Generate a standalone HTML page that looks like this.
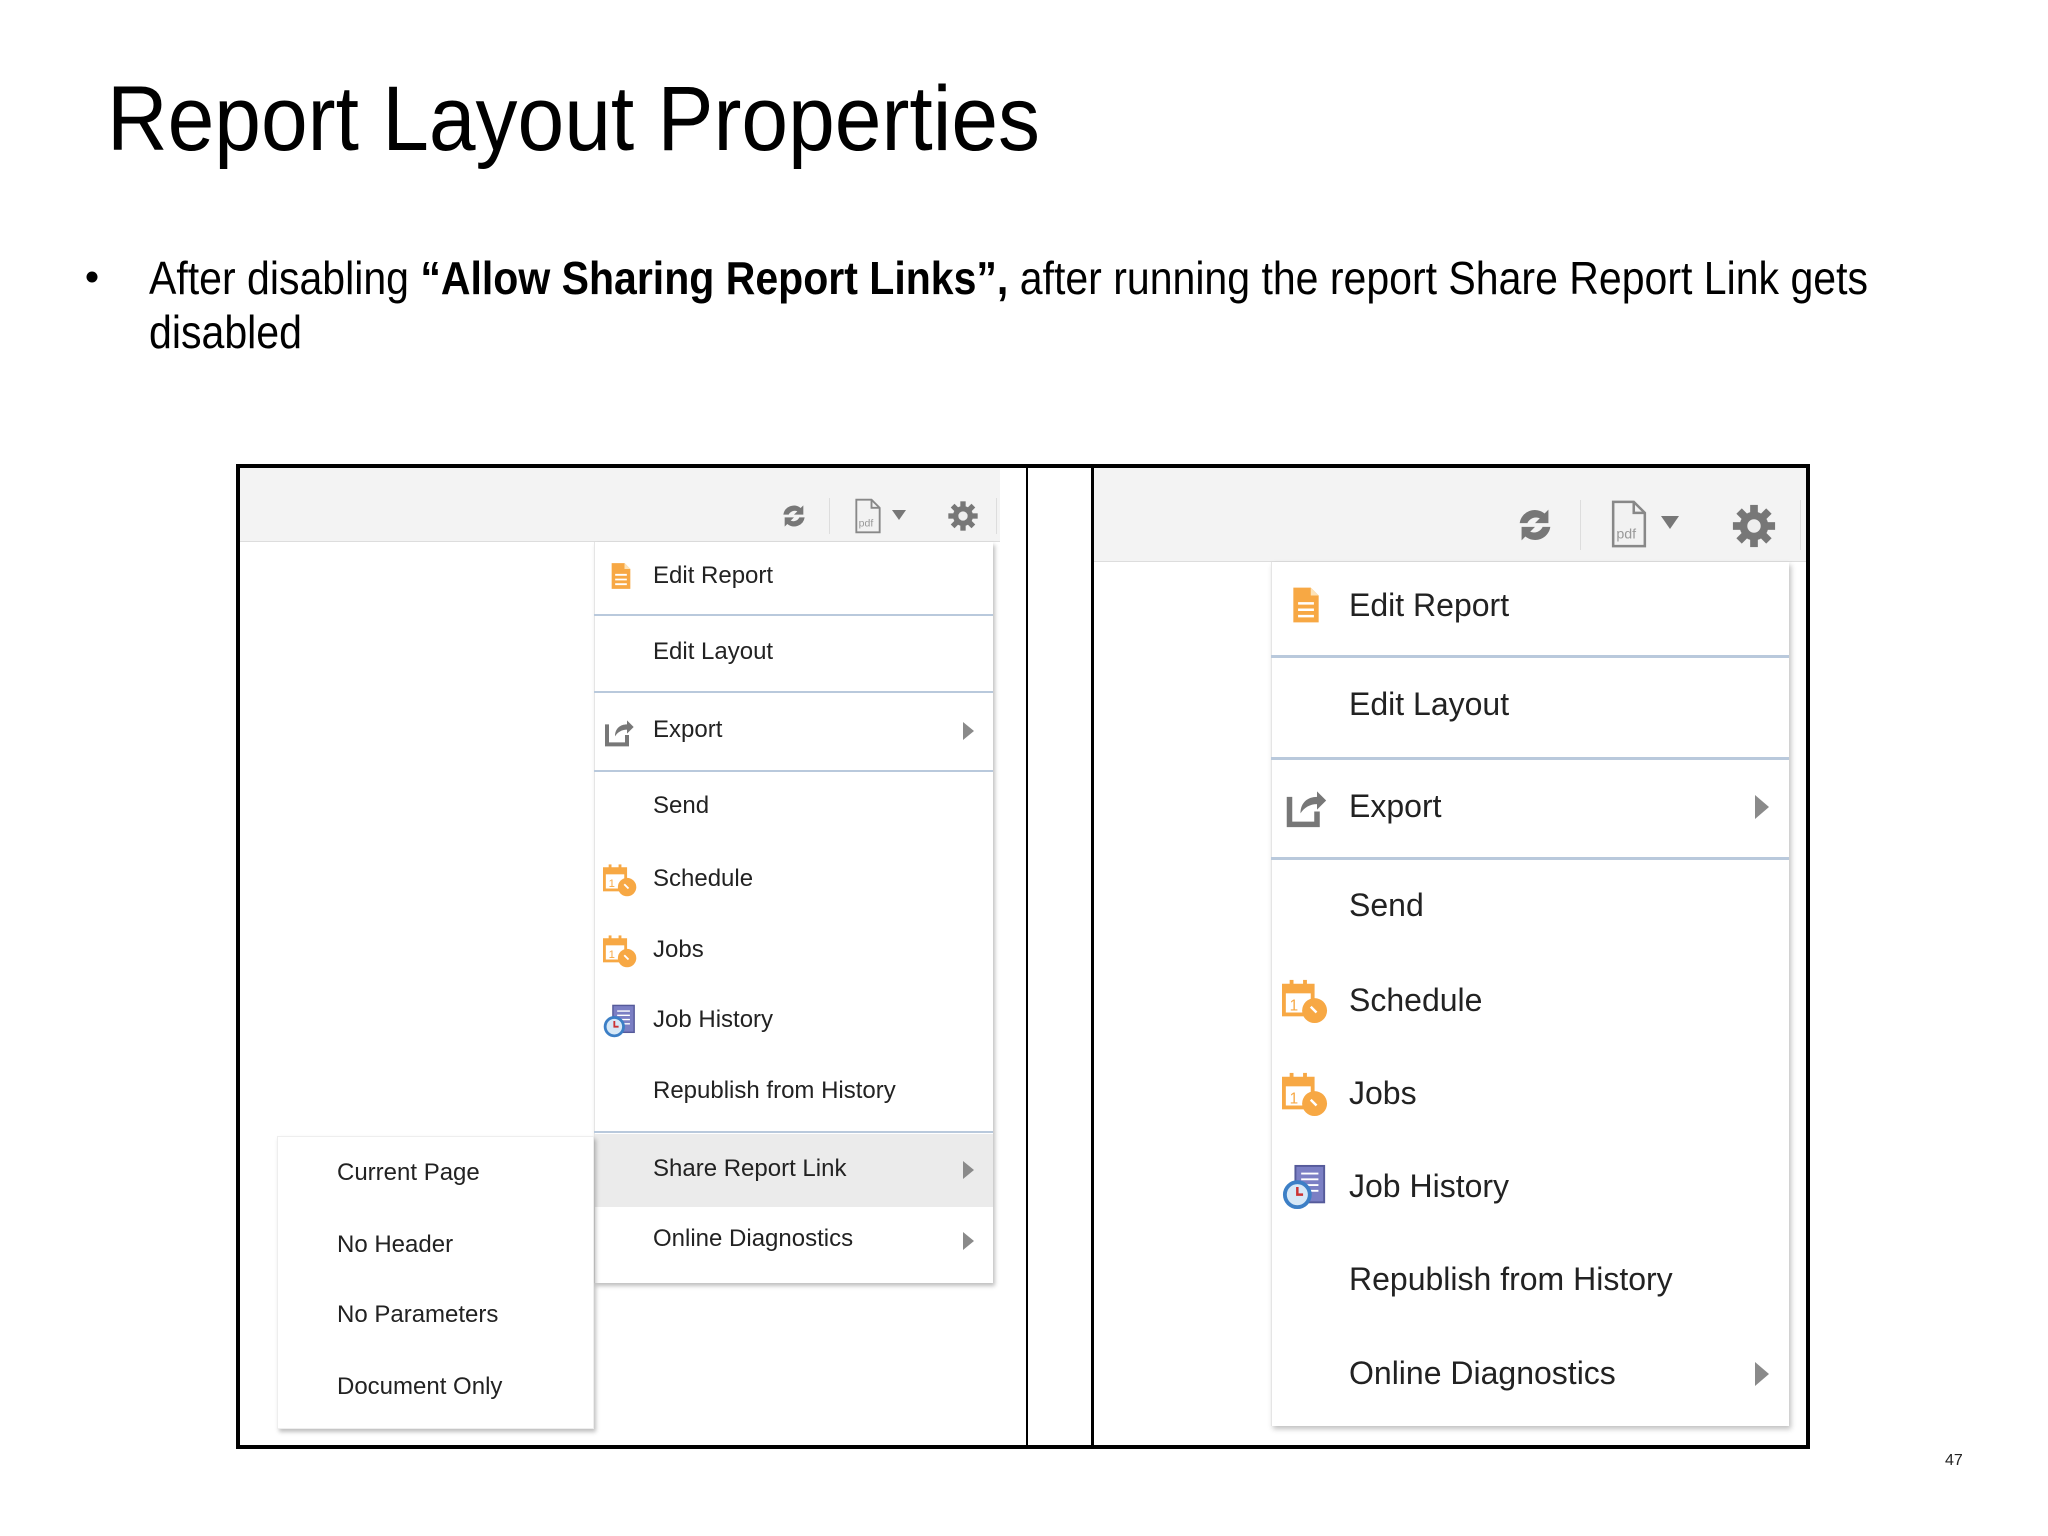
<!DOCTYPE html>
<html><head><meta charset="utf-8"><style>
*{margin:0;padding:0;box-sizing:border-box}
body{width:2048px;height:1536px;background:#fff;position:relative;overflow:hidden;font-family:"Liberation Sans",Arial,sans-serif}
.a{position:absolute}
.t{position:absolute;height:40px;line-height:40px;color:#222;white-space:nowrap}
.L{font-size:24px}
.R{font-size:32px}
.sep{position:absolute;height:2px;background:#b9c9dc}
.tri{position:absolute;width:0;height:0;border-top:9px solid transparent;border-bottom:9px solid transparent;border-left:11px solid #8a8a8a}
svg.ic{position:absolute}
</style></head><body>
<svg width="0" height="0" style="position:absolute">
<defs>
<symbol id="doc" viewBox="0 0 24 24"><path d="M4 1h11l5 5v17H4z" fill="#f7a844"/><path d="M15 1v5h5" fill="#fde3b8"/><path d="M7 11h10M7 15h10M7 19h10" stroke="#fff" stroke-width="1.6"/></symbol>
<symbol id="exp" viewBox="0 0 24 24"><path d="M3 7v15h15v-7" fill="none" stroke="#777" stroke-width="3"/><path d="M9 16c0-6 4-9 9-9V4l5 5-5 5v-3c-4 0-7 2-9 5z" fill="#777"/></symbol>
<symbol id="cal" viewBox="0 0 24 24"><rect x="1" y="4" width="15" height="15" fill="none" stroke="#f7a844" stroke-width="2"/><rect x="1" y="4" width="15" height="4" fill="#f7a844"/><rect x="4" y="1" width="2" height="5" fill="#f7a844"/><rect x="11" y="1" width="2" height="5" fill="#f7a844"/><text x="4" y="17" font-size="8" fill="#f7a844" font-family="Liberation Sans">1</text><circle cx="17" cy="17" r="6.5" fill="#f7a844"/><path d="M15 15l3 3" stroke="#fff" stroke-width="1.3"/></symbol>
<symbol id="hist" viewBox="0 0 24 24"><rect x="7" y="1" width="15" height="19" fill="#7b7fc4" stroke="#555a9a"/><path d="M10 5h9M10 8h9M10 11h9M10 14h9" stroke="#fff"/><circle cx="8" cy="16" r="6.5" fill="#d6e8f7" stroke="#3c7fc6" stroke-width="2"/><path d="M8 12v4h3" stroke="#c33" stroke-width="1.3" fill="none"/></symbol>
<symbol id="ref" viewBox="0 0 24 24"><path d="M4 11a8 8 0 0 1 13-5l2-2v7h-7l2.5-2.5A5 5 0 0 0 8 11z" fill="#777"/><path d="M20 13a8 8 0 0 1-13 5l-2 2v-7h7l-2.5 2.5A5 5 0 0 0 16 13z" fill="#777"/></symbol>
<symbol id="pdf" viewBox="0 0 24 30"><path d="M2 1h13l7 7v21H2z" fill="#f2f2f2" stroke="#888" stroke-width="1.6"/><path d="M15 1v7h7" fill="none" stroke="#888" stroke-width="1.6"/><text x="4" y="24" font-size="9" fill="#999" font-family="Liberation Sans">pdf</text></symbol>
<symbol id="gear" viewBox="0 0 24 24"><g fill="#777"><circle cx="12" cy="12" r="7.5"/><rect x="10" y="1" width="4" height="22"/><rect x="1" y="10" width="22" height="4"/><rect x="10" y="1" width="4" height="22" transform="rotate(45 12 12)"/><rect x="10" y="1" width="4" height="22" transform="rotate(-45 12 12)"/></g><circle cx="12" cy="12" r="3.5" fill="#eee"/></symbol>
</defs></svg>

<svg class="a" style="left:0;top:0" width="2048" height="380">
<text x="107" y="150" font-size="92" font-family="Liberation Sans" fill="#000" textLength="933" lengthAdjust="spacingAndGlyphs">Report Layout Properties</text>
<circle cx="92" cy="277" r="5.5" fill="#000"/>
<text x="149" y="294" font-size="46" font-family="Liberation Sans" fill="#000" textLength="1719" lengthAdjust="spacingAndGlyphs">After disabling <tspan font-weight="bold">“Allow Sharing Report Links”,</tspan> after running the report Share Report Link gets</text>
<text x="149" y="348" font-size="46" font-family="Liberation Sans" fill="#000" textLength="153" lengthAdjust="spacingAndGlyphs">disabled</text>
</svg>

<!-- frames -->
<div class="a" style="left:236px;top:464px;width:1574px;height:4px;background:#000"></div>
<div class="a" style="left:236px;top:1445px;width:1574px;height:4px;background:#000"></div>
<div class="a" style="left:236px;top:464px;width:4px;height:985px;background:#000"></div>
<div class="a" style="left:1026px;top:464px;width:2px;height:985px;background:#000"></div>
<div class="a" style="left:1091px;top:464px;width:3px;height:985px;background:#000"></div>
<div class="a" style="left:1806px;top:464px;width:4px;height:985px;background:#000"></div>

<!-- left toolbar -->
<div class="a" style="left:240px;top:468px;width:760px;height:74px;background:#f3f3f3;border-bottom:1px solid #ddd"></div>
<svg class="ic" style="left:778px;top:500px" width="32" height="32"><use href="#ref"/></svg>
<div class="a" style="left:829px;top:498px;width:1px;height:36px;background:#ddd"></div>
<svg class="ic" style="left:854px;top:498px" width="28" height="36"><use href="#pdf"/></svg>
<div class="a" style="left:892px;top:510px;border-left:7px solid transparent;border-right:7px solid transparent;border-top:10px solid #777"></div>
<svg class="ic" style="left:947px;top:500px" width="32" height="32"><use href="#gear"/></svg>
<div class="a" style="left:996px;top:498px;width:1px;height:36px;background:#ddd"></div>

<!-- left menu -->
<div class="a" style="left:594px;top:542px;width:399px;height:741px;background:#fff;box-shadow:2px 3px 4px rgba(0,0,0,.25);border-left:1px solid #e5e5e5"></div>
<div class="a" style="left:595px;top:1134px;width:398px;height:73px;background:#ebebeb"></div>
<div class="sep" style="left:594px;top:614px;width:399px"></div>
<div class="sep" style="left:594px;top:691px;width:399px"></div>
<div class="sep" style="left:594px;top:770px;width:399px"></div>
<div class="sep" style="left:594px;top:1131px;width:399px"></div>
<svg class="ic" style="left:607px;top:561px" width="28" height="30"><use href="#doc"/></svg>
<svg class="ic" style="left:603px;top:715px" width="32" height="32"><use href="#exp"/></svg>
<svg class="ic" style="left:603px;top:863px" width="34" height="34"><use href="#cal"/></svg>
<svg class="ic" style="left:603px;top:934px" width="34" height="34"><use href="#cal"/></svg>
<svg class="ic" style="left:603px;top:1004px" width="34" height="34"><use href="#hist"/></svg>
<div class="t L" style="left:653px;top:556px">Edit Report</div>
<div class="t L" style="left:653px;top:632px">Edit Layout</div>
<div class="t L" style="left:653px;top:710px">Export</div>
<div class="t L" style="left:653px;top:786px">Send</div>
<div class="t L" style="left:653px;top:859px">Schedule</div>
<div class="t L" style="left:653px;top:930px">Jobs</div>
<div class="t L" style="left:653px;top:1000px">Job History</div>
<div class="t L" style="left:653px;top:1071px">Republish from History</div>
<div class="t L" style="left:653px;top:1149px">Share Report Link</div>
<div class="t L" style="left:653px;top:1219px">Online Diagnostics</div>
<div class="tri" style="left:963px;top:722px"></div>
<div class="tri" style="left:963px;top:1161px"></div>
<div class="tri" style="left:963px;top:1232px"></div>

<!-- submenu -->
<div class="a" style="left:277px;top:1136px;width:317px;height:293px;background:#fff;box-shadow:2px 3px 4px rgba(0,0,0,.25);border:1px solid #eee"></div>
<div class="t L" style="left:337px;top:1153px">Current Page</div>
<div class="t L" style="left:337px;top:1225px">No Header</div>
<div class="t L" style="left:337px;top:1295px">No Parameters</div>
<div class="t L" style="left:337px;top:1367px">Document Only</div>

<!-- right toolbar -->
<div class="a" style="left:1094px;top:468px;width:712px;height:94px;background:#f3f3f3;border-bottom:1px solid #ddd"></div>
<svg class="ic" style="left:1512px;top:502px" width="46" height="46"><use href="#ref"/></svg>
<div class="a" style="left:1580px;top:500px;width:1px;height:50px;background:#ddd"></div>
<svg class="ic" style="left:1610px;top:500px" width="38" height="48"><use href="#pdf"/></svg>
<div class="a" style="left:1661px;top:516px;border-left:9px solid transparent;border-right:9px solid transparent;border-top:13px solid #777"></div>
<svg class="ic" style="left:1731px;top:503px" width="46" height="46"><use href="#gear"/></svg>
<div class="a" style="left:1800px;top:500px;width:1px;height:50px;background:#ddd"></div>

<!-- right menu -->
<div class="a" style="left:1271px;top:562px;width:518px;height:864px;background:#fff;box-shadow:2px 3px 5px rgba(0,0,0,.25);border-left:1px solid #e5e5e5"></div>
<div class="sep" style="left:1271px;top:655px;width:518px;height:3px"></div>
<div class="sep" style="left:1271px;top:757px;width:518px;height:3px"></div>
<div class="sep" style="left:1271px;top:857px;width:518px;height:3px"></div>
<svg class="ic" style="left:1287px;top:584px" width="38" height="42"><use href="#doc"/></svg>
<svg class="ic" style="left:1284px;top:784px" width="44" height="44"><use href="#exp"/></svg>
<svg class="ic" style="left:1282px;top:978px" width="46" height="46"><use href="#cal"/></svg>
<svg class="ic" style="left:1282px;top:1071px" width="46" height="46"><use href="#cal"/></svg>
<svg class="ic" style="left:1282px;top:1164px" width="46" height="46"><use href="#hist"/></svg>
<div class="t R" style="left:1349px;top:585px">Edit Report</div>
<div class="t R" style="left:1349px;top:684px">Edit Layout</div>
<div class="t R" style="left:1349px;top:786px">Export</div>
<div class="t R" style="left:1349px;top:885px">Send</div>
<div class="t R" style="left:1349px;top:980px">Schedule</div>
<div class="t R" style="left:1349px;top:1073px">Jobs</div>
<div class="t R" style="left:1349px;top:1166px">Job History</div>
<div class="t R" style="left:1349px;top:1259px">Republish from History</div>
<div class="t R" style="left:1349px;top:1353px">Online Diagnostics</div>
<div class="tri" style="left:1755px;top:795px;border-top-width:12px;border-bottom-width:12px;border-left-width:14px"></div>
<div class="tri" style="left:1755px;top:1362px;border-top-width:12px;border-bottom-width:12px;border-left-width:14px"></div>

<div class="a" style="left:1945px;top:1452px;font-size:16px;color:#222">47</div>
</body></html>
